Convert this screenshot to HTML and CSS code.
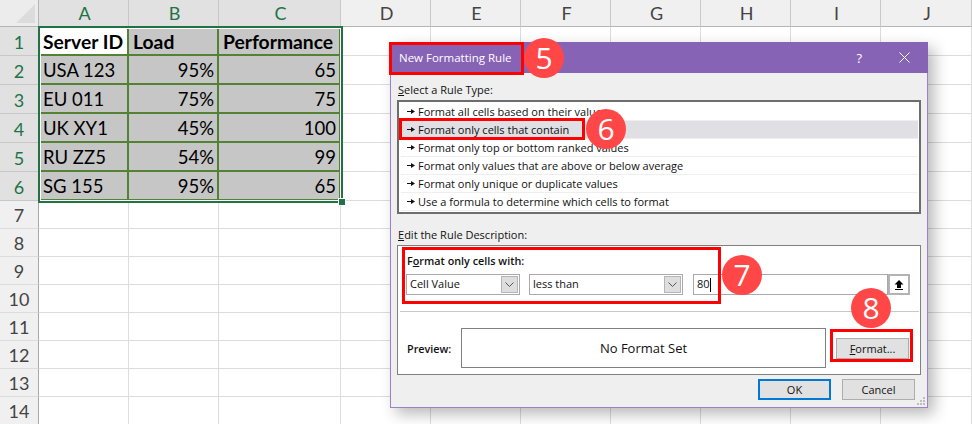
FILE: index.html
```html
<!DOCTYPE html>
<html lang="en">
<head>
<meta charset="utf-8">
<title>New Formatting Rule</title>
<link rel="stylesheet" href="styles.css">
</head>
<body>
<div class="sheet">
  <div class="corner"><span class="corner-tri"></span></div>
  <div class="ch on">A</div><div class="ch on">B</div><div class="ch on">C</div><div class="ch">D</div><div class="ch">E</div><div class="ch">F</div><div class="ch">G</div><div class="ch">H</div><div class="ch">I</div><div class="ch">J</div>

  <div class="rh on">1</div><div class="c d b first">Server ID</div><div class="c d b">Load</div><div class="c d b">Performance</div><div class="c"></div><div class="c"></div><div class="c"></div><div class="c"></div><div class="c"></div><div class="c"></div><div class="c"></div>
  <div class="rh on">2</div><div class="c d">USA 123</div><div class="c d r">95%</div><div class="c d r">65</div><div class="c"></div><div class="c"></div><div class="c"></div><div class="c"></div><div class="c"></div><div class="c"></div><div class="c"></div>
  <div class="rh on">3</div><div class="c d">EU 011</div><div class="c d r">75%</div><div class="c d r">75</div><div class="c"></div><div class="c"></div><div class="c"></div><div class="c"></div><div class="c"></div><div class="c"></div><div class="c"></div>
  <div class="rh on">4</div><div class="c d">UK XY1</div><div class="c d r">45%</div><div class="c d r">100</div><div class="c"></div><div class="c"></div><div class="c"></div><div class="c"></div><div class="c"></div><div class="c"></div><div class="c"></div>
  <div class="rh on">5</div><div class="c d">RU ZZ5</div><div class="c d r">54%</div><div class="c d r">99</div><div class="c"></div><div class="c"></div><div class="c"></div><div class="c"></div><div class="c"></div><div class="c"></div><div class="c"></div>
  <div class="rh on">6</div><div class="c d">SG 155</div><div class="c d r">95%</div><div class="c d r">65</div><div class="c"></div><div class="c"></div><div class="c"></div><div class="c"></div><div class="c"></div><div class="c"></div><div class="c"></div>
  <div class="rh">7</div><div class="c"></div><div class="c"></div><div class="c"></div><div class="c"></div><div class="c"></div><div class="c"></div><div class="c"></div><div class="c"></div><div class="c"></div><div class="c"></div>
  <div class="rh">8</div><div class="c"></div><div class="c"></div><div class="c"></div><div class="c"></div><div class="c"></div><div class="c"></div><div class="c"></div><div class="c"></div><div class="c"></div><div class="c"></div>
  <div class="rh">9</div><div class="c"></div><div class="c"></div><div class="c"></div><div class="c"></div><div class="c"></div><div class="c"></div><div class="c"></div><div class="c"></div><div class="c"></div><div class="c"></div>
  <div class="rh">10</div><div class="c"></div><div class="c"></div><div class="c"></div><div class="c"></div><div class="c"></div><div class="c"></div><div class="c"></div><div class="c"></div><div class="c"></div><div class="c"></div>
  <div class="rh">11</div><div class="c"></div><div class="c"></div><div class="c"></div><div class="c"></div><div class="c"></div><div class="c"></div><div class="c"></div><div class="c"></div><div class="c"></div><div class="c"></div>
  <div class="rh">12</div><div class="c"></div><div class="c"></div><div class="c"></div><div class="c"></div><div class="c"></div><div class="c"></div><div class="c"></div><div class="c"></div><div class="c"></div><div class="c"></div>
  <div class="rh">13</div><div class="c"></div><div class="c"></div><div class="c"></div><div class="c"></div><div class="c"></div><div class="c"></div><div class="c"></div><div class="c"></div><div class="c"></div><div class="c"></div>
  <div class="rh">14</div><div class="c"></div><div class="c"></div><div class="c"></div><div class="c"></div><div class="c"></div><div class="c"></div><div class="c"></div><div class="c"></div><div class="c"></div><div class="c"></div>
</div>

<div class="selection"><span class="handle"></span></div>

<section class="dialog">
  <header class="titlebar">
    <span class="title">New Formatting Rule</span>
    <span class="help">?</span>
    <svg class="close" width="11" height="11" viewBox="0 0 11 11"><path d="M.5.5l10 10M10.5.5l-10 10" stroke="#fff" stroke-width="1" fill="none"/></svg>
  </header>
  <div class="body">
    <div class="label"><u>S</u>elect a Rule Type:</div>
    <ul class="list">
      <li class="item"><svg class="bullet" width="8" height="5" viewBox="0 0 8 5"><path d="M0 2h4V0l4 2.500L4 5V3H0z" fill="#111"/></svg>Format all cells based on their values</li>
      <li class="item sel"><svg class="bullet" width="8" height="5" viewBox="0 0 8 5"><path d="M0 2h4V0l4 2.500L4 5V3H0z" fill="#111"/></svg>Format only cells that contain</li>
      <li class="item"><svg class="bullet" width="8" height="5" viewBox="0 0 8 5"><path d="M0 2h4V0l4 2.500L4 5V3H0z" fill="#111"/></svg>Format only top or bottom ranked values</li>
      <li class="item"><svg class="bullet" width="8" height="5" viewBox="0 0 8 5"><path d="M0 2h4V0l4 2.500L4 5V3H0z" fill="#111"/></svg>Format only values that are above or below average</li>
      <li class="item"><svg class="bullet" width="8" height="5" viewBox="0 0 8 5"><path d="M0 2h4V0l4 2.500L4 5V3H0z" fill="#111"/></svg>Format only unique or duplicate values</li>
      <li class="item"><svg class="bullet" width="8" height="5" viewBox="0 0 8 5"><path d="M0 2h4V0l4 2.500L4 5V3H0z" fill="#111"/></svg>Use a formula to determine which cells to format</li>
    </ul>
    <div class="label label-edit"><u>E</u>dit the Rule Description:</div>
    <div class="group">
      <div class="strong cond-title">F<u>o</u>rmat only cells with:</div>
      <div class="cond-row">
        <div class="combo combo-a"><span class="combo-text">Cell Value</span><span class="drop"><svg width="9" height="5" viewBox="0 0 9 5"><path d="M.5.5l4 4 4-4" stroke="#555" fill="none"/></svg></span></div>
        <div class="combo combo-b"><span class="combo-text">less than</span><span class="drop"><svg width="9" height="5" viewBox="0 0 9 5"><path d="M.5.5l4 4 4-4" stroke="#555" fill="none"/></svg></span></div>
        <div class="value"><span class="combo-text">80</span><span class="caret"></span></div>
        <div class="refbtn"><svg width="10" height="10" viewBox="0 0 10 10"><path d="M5 0l4.500 4.500H7V8H3V4.500H.5z M1 9h8v1H1z" fill="#000"/></svg></div>
      </div>
      <div class="sep"></div>
      <div class="preview-row">
        <span class="strong preview-label">Preview:</span>
        <div class="preview">No Format Set</div>
        <div class="btn btn-format"><span><u>F</u>ormat...</span></div>
      </div>
    </div>
    <div class="actions">
      <div class="btn btn-ok">OK</div>
      <div class="btn">Cancel</div>
    </div>
  </div>
  <svg class="grip" width="9" height="9" viewBox="0 0 9 9"><path d="M6 0h2v2H6zM3 3h2v2H3zM6 3h2v2H6zM0 6h2v2H0zM3 6h2v2H3zM6 6h2v2H6z" fill="#bdbdbd"/></svg>
</section>

<div class="mark mark-5"></div>
<div class="mark mark-6"></div>
<div class="mark mark-7"></div>
<div class="mark mark-8"></div>
<div class="num num-5">5</div>
<div class="num num-6">6</div>
<div class="num num-7">7</div>
<div class="num num-8">8</div>
</body>
</html>
```
FILE: styles.css
```css
* { box-sizing: border-box; }
html, body { margin: 0; padding: 0; }
body { width: 972px; height: 424px; overflow: hidden; position: relative; background: #fff; font-family: "Open Sans", "Noto Sans", sans-serif; color: #111; }

.sheet { display: grid; grid-template-columns: 39px 90px 90px 122px 90px 90px 90px 90px 90px 90px 91px; grid-template-rows: 27px repeat(6, 29px) repeat(8, 28px); font-family: Lato, "Liberation Sans", sans-serif; }
.corner { background: #ececec; border-right: 1px solid #b5b5b5; border-bottom: 1px solid #b5b5b5; position: relative; }
.corner-tri { position: absolute; right: 3px; bottom: 3px; width: 0; height: 0; border-left: 19px solid transparent; border-bottom: 19px solid #dcdcdc; }
.ch { background: #f0f0f0; border-right: 1px solid #c8c8c8; border-bottom: 1px solid #b5b5b5; display: flex; align-items: center; justify-content: center; padding-left: 2px; font-size: 18px; color: #444; }
.ch.on { background: #e1e1e1; color: #217346; }
.rh { background: #f0f0f0; border-right: 1px solid #a8a8a8; border-bottom: 1px solid #dcdcdc; display: flex; align-items: center; justify-content: center; padding-top: 1px; font-size: 18px; color: #444; }
.rh.on { background: #e1e1e1; color: #217346; border-bottom-color: #c8c8c8; }
.c { border-right: 1px solid #dcdcdc; border-bottom: 1px solid #dcdcdc; display: flex; align-items: center; padding: 1px 3px 0 4px; font-size: 18.500px; color: #000; white-space: nowrap; overflow: hidden; }
.d { background: #c6c6c6; border-right: 2px solid #548235; border-bottom: 2px solid #548235; }
.b { font-weight: 700; font-size: 19.300px; }
.first { background: #fff; }
.r { justify-content: flex-end; }

.selection { position: absolute; left: 38px; top: 26px; width: 305px; height: 177px; border: 2px solid #217346; box-shadow: inset 0 0 0 1px #fff; }
.handle { position: absolute; right: -4px; bottom: -4px; width: 6px; height: 6px; background: #217346; outline: 1px solid #fff; }

.dialog { position: absolute; left: 390px; top: 42px; width: 538px; height: 366px; background: #efefef; border: 1px solid #9a82c8; box-shadow: 6px 6px 14px rgba(0, 0, 0, .28); display: flex; flex-direction: column; font-size: 11px; }
.titlebar { height: 31px; margin: -1px -1px 0; background: #8763b5; color: #fff; display: flex; align-items: center; padding: 0 18px 0 9px; font-size: 11.500px; flex: none; }
.title { flex: 1; }
.help { margin-right: 37px; font-size: 13px; }
.close { display: block; }
.body { flex: 1; display: flex; flex-direction: column; padding: 9px 6px 0; }
.label { height: 16px; line-height: 16px; margin-left: 1px; }
.list { list-style: none; margin: 2px 0 0; padding: 1px 1px 0 2px; height: 114px; width: 524px; background: #fff; border: 2px solid #6d6d6d; flex: none; }
.item { height: 18px; display: flex; align-items: center; border-bottom: 1px solid #eee; padding-left: 6px; padding-bottom: 1px; white-space: nowrap; }
.item.sel { background: #e0dfe4; }
.bullet { margin-right: 3px; flex: none; }
.label-edit { margin-top: 13px; }
.group { margin-top: 2px; width: 524px; height: 130px; background: #fff; border: 1px solid #808080; display: flex; flex-direction: column; padding: 0 9px; }
.strong { font-weight: 600; font-size: 10.800px; }
.cond-title { height: 16px; line-height: 16px; margin-top: 7px; }
.cond-row { display: flex; align-items: stretch; height: 21px; margin-top: 5px; margin-left: -1px; }
.combo { background: #fff; border: 1px solid #a9a9a9; display: flex; align-items: center; justify-content: space-between; padding: 0 1px 0 3px; }
.combo-text { position: relative; top: -1px; }
.combo-a { width: 114px; margin-right: 9px; }
.combo-b { width: 154px; margin-right: 10px; }
.drop { width: 17px; height: 17px; background: #dedede; border: 1px solid #b5b5b5; display: flex; align-items: center; justify-content: center; }
.value { width: 195px; border: 1px solid #a9a9a9; display: flex; align-items: center; padding-left: 3px; }
.caret { width: 1px; height: 14px; background: #000; }
.refbtn { width: 22px; border: 2px solid #b3b3b3; background: #fff; display: flex; align-items: center; justify-content: center; }
.sep { height: 1px; background: #c8c8c8; margin: 16px -8px 0 -7px; }
.preview-row { display: flex; align-items: center; margin-top: 16px; height: 40px; }
.preview-label { width: 54px; }
.preview { width: 365px; height: 40px; border: 1px solid #808080; display: flex; align-items: center; justify-content: center; font-size: 13px; }
.btn { width: 73px; height: 21px; background: #e1e1e1; border: 1px solid #adadad; display: flex; align-items: center; justify-content: center; color: #111; }
.btn-format { margin-left: 10px; }
.actions { display: flex; gap: 11px; margin-top: 4px; width: 518px; justify-content: flex-end; }
.btn-ok { border: 2px solid #0078d7; }
.grip { position: absolute; right: 1px; bottom: 1px; }

.mark { position: absolute; border: 3px solid #f00; }
.mark-5 { left: 389px; top: 42px; width: 135px; height: 33px; }
.mark-6 { left: 399px; top: 118px; width: 186px; height: 22px; }
.mark-7 { left: 402px; top: 247px; width: 319px; height: 57px; }
.mark-8 { left: 830px; top: 329px; width: 83px; height: 33px; }
.num { position: absolute; width: 40px; height: 40px; border-radius: 50%; background: #ff4747; color: #fff; font-size: 30px; line-height: 40px; text-align: center; }
.num-5 { left: 524px; top: 38px; }
.num-6 { left: 586px; top: 109px; }
.num-7 { left: 722px; top: 255px; }
.num-8 { left: 851px; top: 288px; }
```
